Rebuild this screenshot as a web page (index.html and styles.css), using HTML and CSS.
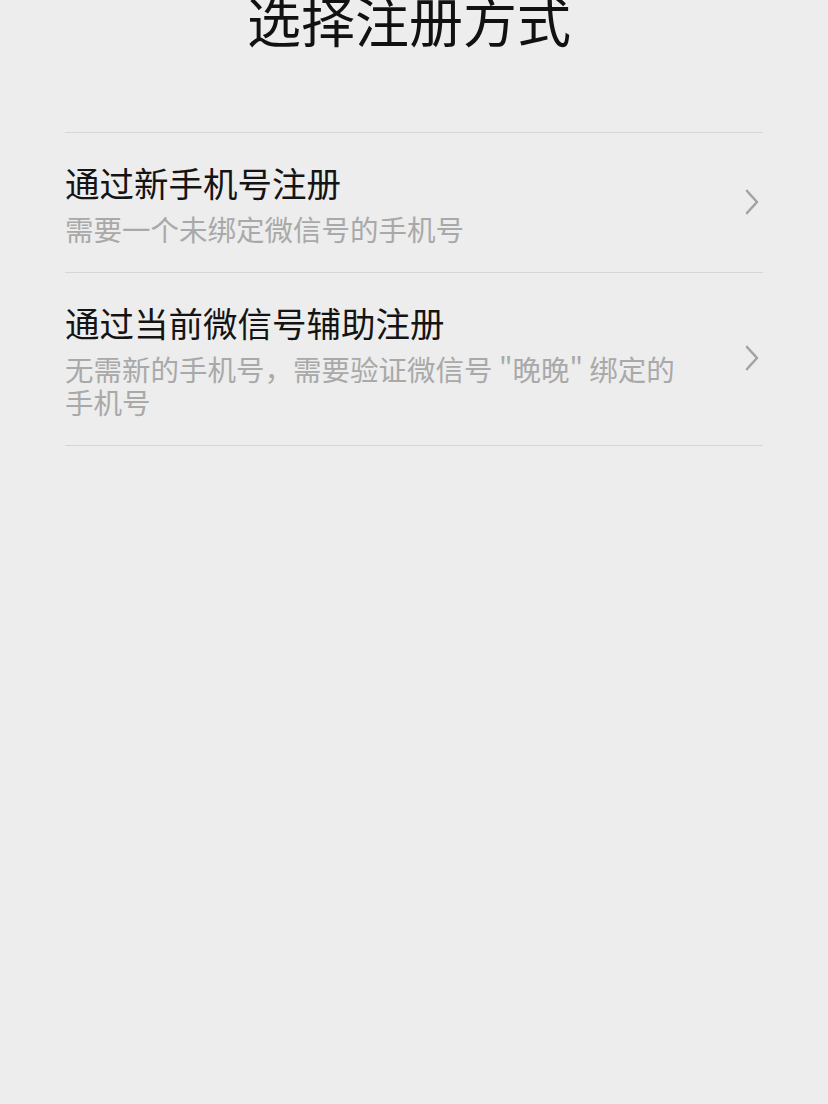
FILE: index.html
```html
<!DOCTYPE html>
<html lang="zh-CN">
<head>
  <meta charset="UTF-8">
  <title>选择注册方式</title>
  <link rel="stylesheet" href="styles.css">
</head>
<body>
<div class="page">
  <h1 class="title">选择注册方式</h1>

  <div class="options">
    <div class="option">
      <div class="option-text">
        <div class="option-name">通过新手机号注册</div>
        <div class="option-desc">需要一个未绑定微信号的手机号</div>
      </div>
      <svg class="arrow" width="20" height="28" viewBox="0 0 20 28">
        <path d="M5 3 L15 14 L5 25" fill="none" stroke="#a3a3a3" stroke-width="2.6" stroke-linecap="round" stroke-linejoin="round"/>
      </svg>
    </div>
    <div class="option">
      <div class="option-text">
        <div class="option-name">通过当前微信号辅助注册</div>
        <div class="option-desc">无需新的手机号，需要验证微信号 "晚晚" 绑定的手机号</div>
      </div>
      <svg class="arrow" width="20" height="28" viewBox="0 0 20 28">
        <path d="M5 3 L15 14 L5 25" fill="none" stroke="#a3a3a3" stroke-width="2.6" stroke-linecap="round" stroke-linejoin="round"/>
      </svg>
    </div>
  </div>
</div>
</body>
</html>
```

FILE: styles.css
```css
body {
  margin: 0;
  background-color: #ededed;
  font-family: "Noto Sans CJK SC", "Noto Sans", sans-serif;
  overflow: hidden;
}
.page {
  width: 828px;
  height: 1104px;
  padding: 0 65px;
  box-sizing: border-box;
}
.title {
  margin: 0 10px 0 0;
  font-size: 54px;
  line-height: 40px;
  font-weight: 400;
  color: #111111;
  text-align: center;
}
.options {
  margin-top: 92px;
  border-top: 1px solid #d6d6d6;
}
.option {
  display: flex;
  align-items: center;
  padding: 25px 0 27px;
  border-bottom: 1px solid #d6d6d6;
}
.option-text {
  flex: 1;
  padding-right: 48px;
}
.option-name {
  font-size: 34.5px;
  line-height: 48px;
  color: #141414;
}
.option-desc {
  margin-top: 6px;
  font-size: 28.5px;
  line-height: 33px;
  color: #a9a9a9;
}
.arrow {
  flex-shrink: 0;
  margin-right: 1px;
}
```
